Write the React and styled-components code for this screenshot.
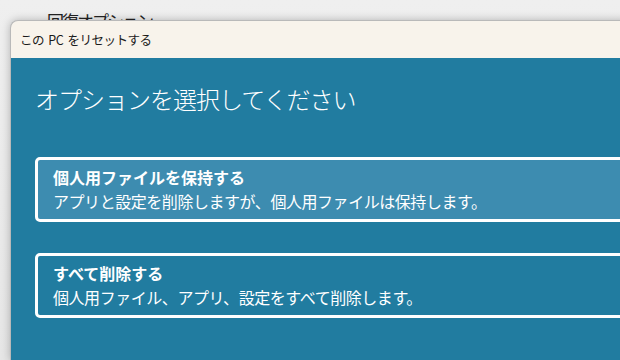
import styled, { createGlobalStyle } from "styled-components";

const GlobalStyle = createGlobalStyle`
body{
    margin:0;
    background:#ebebeb;
    font-family:"Noto Sans CJK JP","Noto Sans",sans-serif;
}
`;

const Desktop = styled.div`
width:620px;
height:360px;
overflow:hidden;
background:linear-gradient(#efefef, #e6e6e6);
padding-left:10px;
box-sizing:border-box;
`;

const BehindTitle = styled.div`
height:20px;
overflow:hidden;
padding-left:37px;
font-size:17px;
line-height:1;
letter-spacing:-2px;
color:#202020;
span{
    display:block;
    margin-top:12px;
}
`;

const Window = styled.div`
height:340px;
margin-right:-20px;
display:flex;
flex-direction:column;
background:#f8f3eb;
border:1px solid #b9b9b9;
border-right:none;
border-bottom:none;
border-top-left-radius:8px;
box-shadow:0 0 8px rgba(0,0,0,0.25);
overflow:hidden;
`;

const TitleBar = styled.div`
height:37px;
display:flex;
align-items:center;
padding-left:9px;
font-size:12.5px;
letter-spacing:-0.5px;
word-spacing:2px;
color:#1a1a1a;
`;

const Content = styled.div`
flex:1;
background:#217ca0;
padding:25px 0 0 24px;
color:#fff;
`;

const Heading = styled.h1`
margin:0;
font-size:24px;
font-weight:300;
letter-spacing:-1px;
line-height:32px;
`;

const OptionList = styled.div`
display:flex;
flex-direction:column;
gap:31px;
margin-top:42px;
margin-right:-10px;
`;

const OptionCard = styled.div`
border:3px solid #fff;
border-radius:5px;
padding:5px 15px 6px;
background:${p => (p.$active ? "#3d8cb0" : "transparent")};
font-size:16px;
line-height:24px;
b{
    display:block;
    font-weight:700;
}
span{
    display:block;
    letter-spacing:-0.45px;
}
`;

export default function App() {
    return (
        <Desktop>
            <GlobalStyle />
            <BehindTitle><span>回復オプション</span></BehindTitle>
            <Window>
                <TitleBar>この PC をリセットする</TitleBar>
                <Content>
                    <Heading>オプションを選択してください</Heading>
                    <OptionList>
                        <OptionCard $active>
                            <b>個人用ファイルを保持する</b>
                            <span>アプリと設定を削除しますが、個人用ファイルは保持します。</span>
                        </OptionCard>
                        <OptionCard>
                            <b>すべて削除する</b>
                            <span>個人用ファイル、アプリ、設定をすべて削除します。</span>
                        </OptionCard>
                    </OptionList>
                </Content>
            </Window>
        </Desktop>
    );
}
